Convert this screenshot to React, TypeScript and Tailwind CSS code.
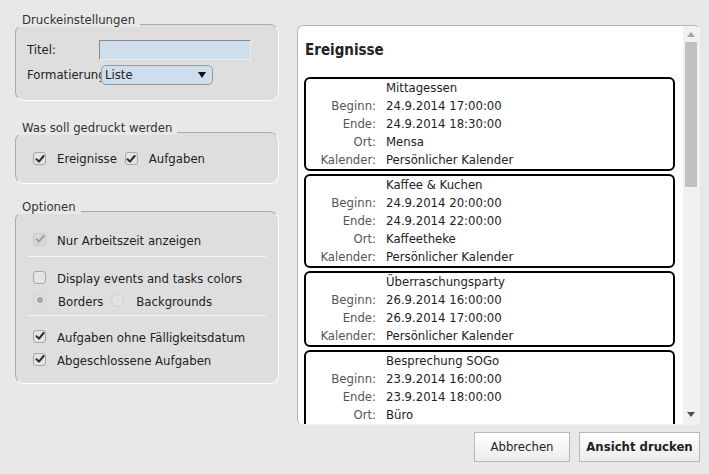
import React from "react";

const Check = ({ checked = true, disabled = false }: { checked?: boolean; disabled?: boolean }) => (
  <span
    className={`flex h-[13px] w-[13px] shrink-0 items-center justify-center rounded-[3px] border ${
      disabled ? "border-[#c8c8c8] bg-[#d8d8d8]" : "border-[#a8a8a8] bg-[#e4e4e4]"
    }`}
  >
    {checked && (
      <svg width="10" height="10" viewBox="0 0 10 10">
        <path
          d="M1.5 5.2 L4 7.6 L8.6 2"
          fill="none"
          stroke={disabled ? "#a0a0a0" : "#2a2a2a"}
          strokeWidth="2"
          strokeLinecap="round"
          strokeLinejoin="round"
        />
      </svg>
    )}
  </span>
);

const Radio = ({ checked = false }: { checked?: boolean }) => (
  <span className="flex h-[13px] w-[13px] shrink-0 items-center justify-center rounded-full border border-[#cfcfcf] bg-[#e2e2e2]">
    {checked && <span className="h-[6px] w-[6px] rounded-full bg-[#a8a8a8]" />}
  </span>
);

function Group({ legend, className = "", children }: { legend: string; className?: string; children: React.ReactNode }) {
  return (
    <div className="flex flex-col">
      <div className="relative z-10 ml-[2px] self-start bg-[#e8e8e8] px-[5px] leading-[15px] text-[#333]">{legend}</div>
      <div
        className={`-mt-[3px] rounded-[9px] border border-b-white border-l-[#a9a9a9] border-r-white border-t-[#a9a9a9] bg-[#dedede] ${className}`}
      >
        {children}
      </div>
    </div>
  );
}

type Ev = { title: string; rows: [string, string][] };

const events: Ev[] = [
  {
    title: "Mittagessen",
    rows: [
      ["Beginn:", "24.9.2014 17:00:00"],
      ["Ende:", "24.9.2014 18:30:00"],
      ["Ort:", "Mensa"],
      ["Kalender:", "Persönlicher Kalender"],
    ],
  },
  {
    title: "Kaffee & Kuchen",
    rows: [
      ["Beginn:", "24.9.2014 20:00:00"],
      ["Ende:", "24.9.2014 22:00:00"],
      ["Ort:", "Kaffeetheke"],
      ["Kalender:", "Persönlicher Kalender"],
    ],
  },
  {
    title: "Überraschungsparty",
    rows: [
      ["Beginn:", "26.9.2014 16:00:00"],
      ["Ende:", "26.9.2014 17:00:00"],
      ["Kalender:", "Persönlicher Kalender"],
    ],
  },
  {
    title: "Besprechung SOGo",
    rows: [
      ["Beginn:", "23.9.2014 16:00:00"],
      ["Ende:", "23.9.2014 18:00:00"],
      ["Ort:", "Büro"],
      ["Kalender:", "Persönlicher Kalender"],
    ],
  },
];

function EventCard({ ev }: { ev: Ev }) {
  return (
    <div className="mb-[3px] rounded-[6px] border-2 border-black leading-[18px]">
      <div className="flex">
        <span className="w-[70px] shrink-0" />
        <span className="ml-[10px] text-[#222]">{ev.title}</span>
      </div>
      {ev.rows.map(([k, v]) => (
        <div key={k} className="flex">
          <span className="w-[70px] shrink-0 text-right text-[#555]">{k}</span>
          <span className="ml-[10px] text-[#222]">{v}</span>
        </div>
      ))}
    </div>
  );
}

export default function App() {
  return (
    <div
      className="h-[474px] w-[709px] overflow-hidden bg-[#e8e8e8] text-[13px] text-[#222]"
      style={{ fontFamily: '"DejaVu Sans Condensed", "DejaVu Sans", sans-serif' }}
    >
      <div className="flex pt-[12px]">
        {/* left column */}
        <div className="ml-[15px] flex w-[264px] flex-col">
          <Group legend="Druckeinstellungen" className="h-[77px] pl-[11px] pt-[15px]">
            <div className="flex h-[20px] items-center">
              <span className="w-[72px]">Titel:</span>
              <div className="h-[20px] w-[152px] border border-b-[#e6eef6] border-l-[#8a8a8a] border-r-[#e6eef6] border-t-[#8a8a8a] bg-[#cfdeec]" />
            </div>
            <div className="mt-[5px] flex h-[20px] items-center">
              <span className="w-[74px] overflow-hidden whitespace-nowrap">Formatierung</span>
              <div className="flex h-[20px] w-[112px] items-center justify-between rounded-[5px] border border-[#9a9a9a] bg-[#cfdeec] pl-[3px] pr-[6px]">
                <span>Liste</span>
                <svg width="8" height="6" viewBox="0 0 8 6">
                  <path d="M0 0 H8 L4 6 Z" fill="#111" />
                </svg>
              </div>
            </div>
          </Group>

          <div className="mt-[19px]">
            <Group legend="Was soll gedruckt werden" className="h-[52px] pl-[17px] pt-[16px]">
              <div className="flex items-center">
                <Check />
                <span className="ml-[11px]">Ereignisse</span>
                <span className="ml-[8px]">
                  <Check />
                </span>
                <span className="ml-[11px]">Aufgaben</span>
              </div>
            </Group>
          </div>

          <div className="mt-[15px]">
            <Group legend="Optionen" className="h-[173px] px-[12px] pt-[18px]">
              <div className="flex h-[18px] items-center pl-[5px]">
                <Check disabled />
                <span className="ml-[11px] mt-[4px]">Nur Arbeitszeit anzeigen</span>
              </div>
              <div className="mt-[8px] h-px w-[238px] bg-[#f5f5f5]" />
              <div className="mt-[11px] flex h-[18px] items-center pl-[5px]">
                <Check checked={false} />
                <span className="ml-[11px] mt-[4px]">Display events and tasks colors</span>
              </div>
              <div className="mt-[5px] flex h-[18px] items-center pl-[5px]">
                <Radio checked />
                <span className="ml-[12px] mt-[4px]">Borders</span>
                <span className="ml-[8px]">
                  <Radio />
                </span>
                <span className="ml-[12px] mt-[4px]">Backgrounds</span>
              </div>
              <div className="mt-[6px] h-px w-[238px] bg-[#f5f5f5]" />
              <div className="mt-[11px] flex h-[18px] items-center pl-[5px]">
                <Check />
                <span className="ml-[11px] mt-[4px]">Aufgaben ohne Fälligkeitsdatum</span>
              </div>
              <div className="mt-[5px] flex h-[18px] items-center pl-[5px]">
                <Check />
                <span className="ml-[11px] mt-[4px]">Abgeschlossene Aufgaben</span>
              </div>
            </Group>
          </div>
        </div>

        {/* right preview */}
        <div className="ml-[18px] flex flex-col">
          <div className="mt-[13px] flex h-[400px] w-[403px] overflow-hidden rounded-[6px] border border-b-[#f2f2f2] border-l-[#b4b4b4] border-r-[#f2f2f2] border-t-[#b4b4b4] bg-white">
            <div className="flex-1 overflow-hidden pl-[6px] pr-[8px]">
              <div className="mt-[12px] mb-[15px] pl-[1px] text-[15px] font-bold leading-[24px] text-[#222]">Ereignisse</div>
              {events.map((ev) => (
                <EventCard key={ev.title} ev={ev} />
              ))}
            </div>
            <div className="flex w-[16px] flex-col items-center bg-[#f1f1f1]">
              <svg className="mt-[6px]" width="8" height="5" viewBox="0 0 8 5">
                <path d="M0 5 H8 L4 0 Z" fill="#a3a3a3" />
              </svg>
              <div className="mt-[5px] h-[145px] w-[12px] bg-[#c1c1c1]" />
              <div className="flex-1" />
              <svg className="mb-[7px]" width="8" height="5" viewBox="0 0 8 5">
                <path d="M0 0 H8 L4 5 Z" fill="#505050" />
              </svg>
            </div>
          </div>
          <div className="mt-[7px] flex justify-end gap-[9px]">
            <button className="h-[30px] w-[96px] border border-[#b8b8b8] bg-gradient-to-b from-white to-[#ececec] text-[#222]">
              Abbrechen
            </button>
            <button className="h-[30px] w-[121px] whitespace-nowrap border border-[#b8b8b8] bg-gradient-to-b from-white to-[#ececec] font-bold text-[#222]">
              Ansicht drucken
            </button>
          </div>
        </div>
      </div>
    </div>
  );
}
